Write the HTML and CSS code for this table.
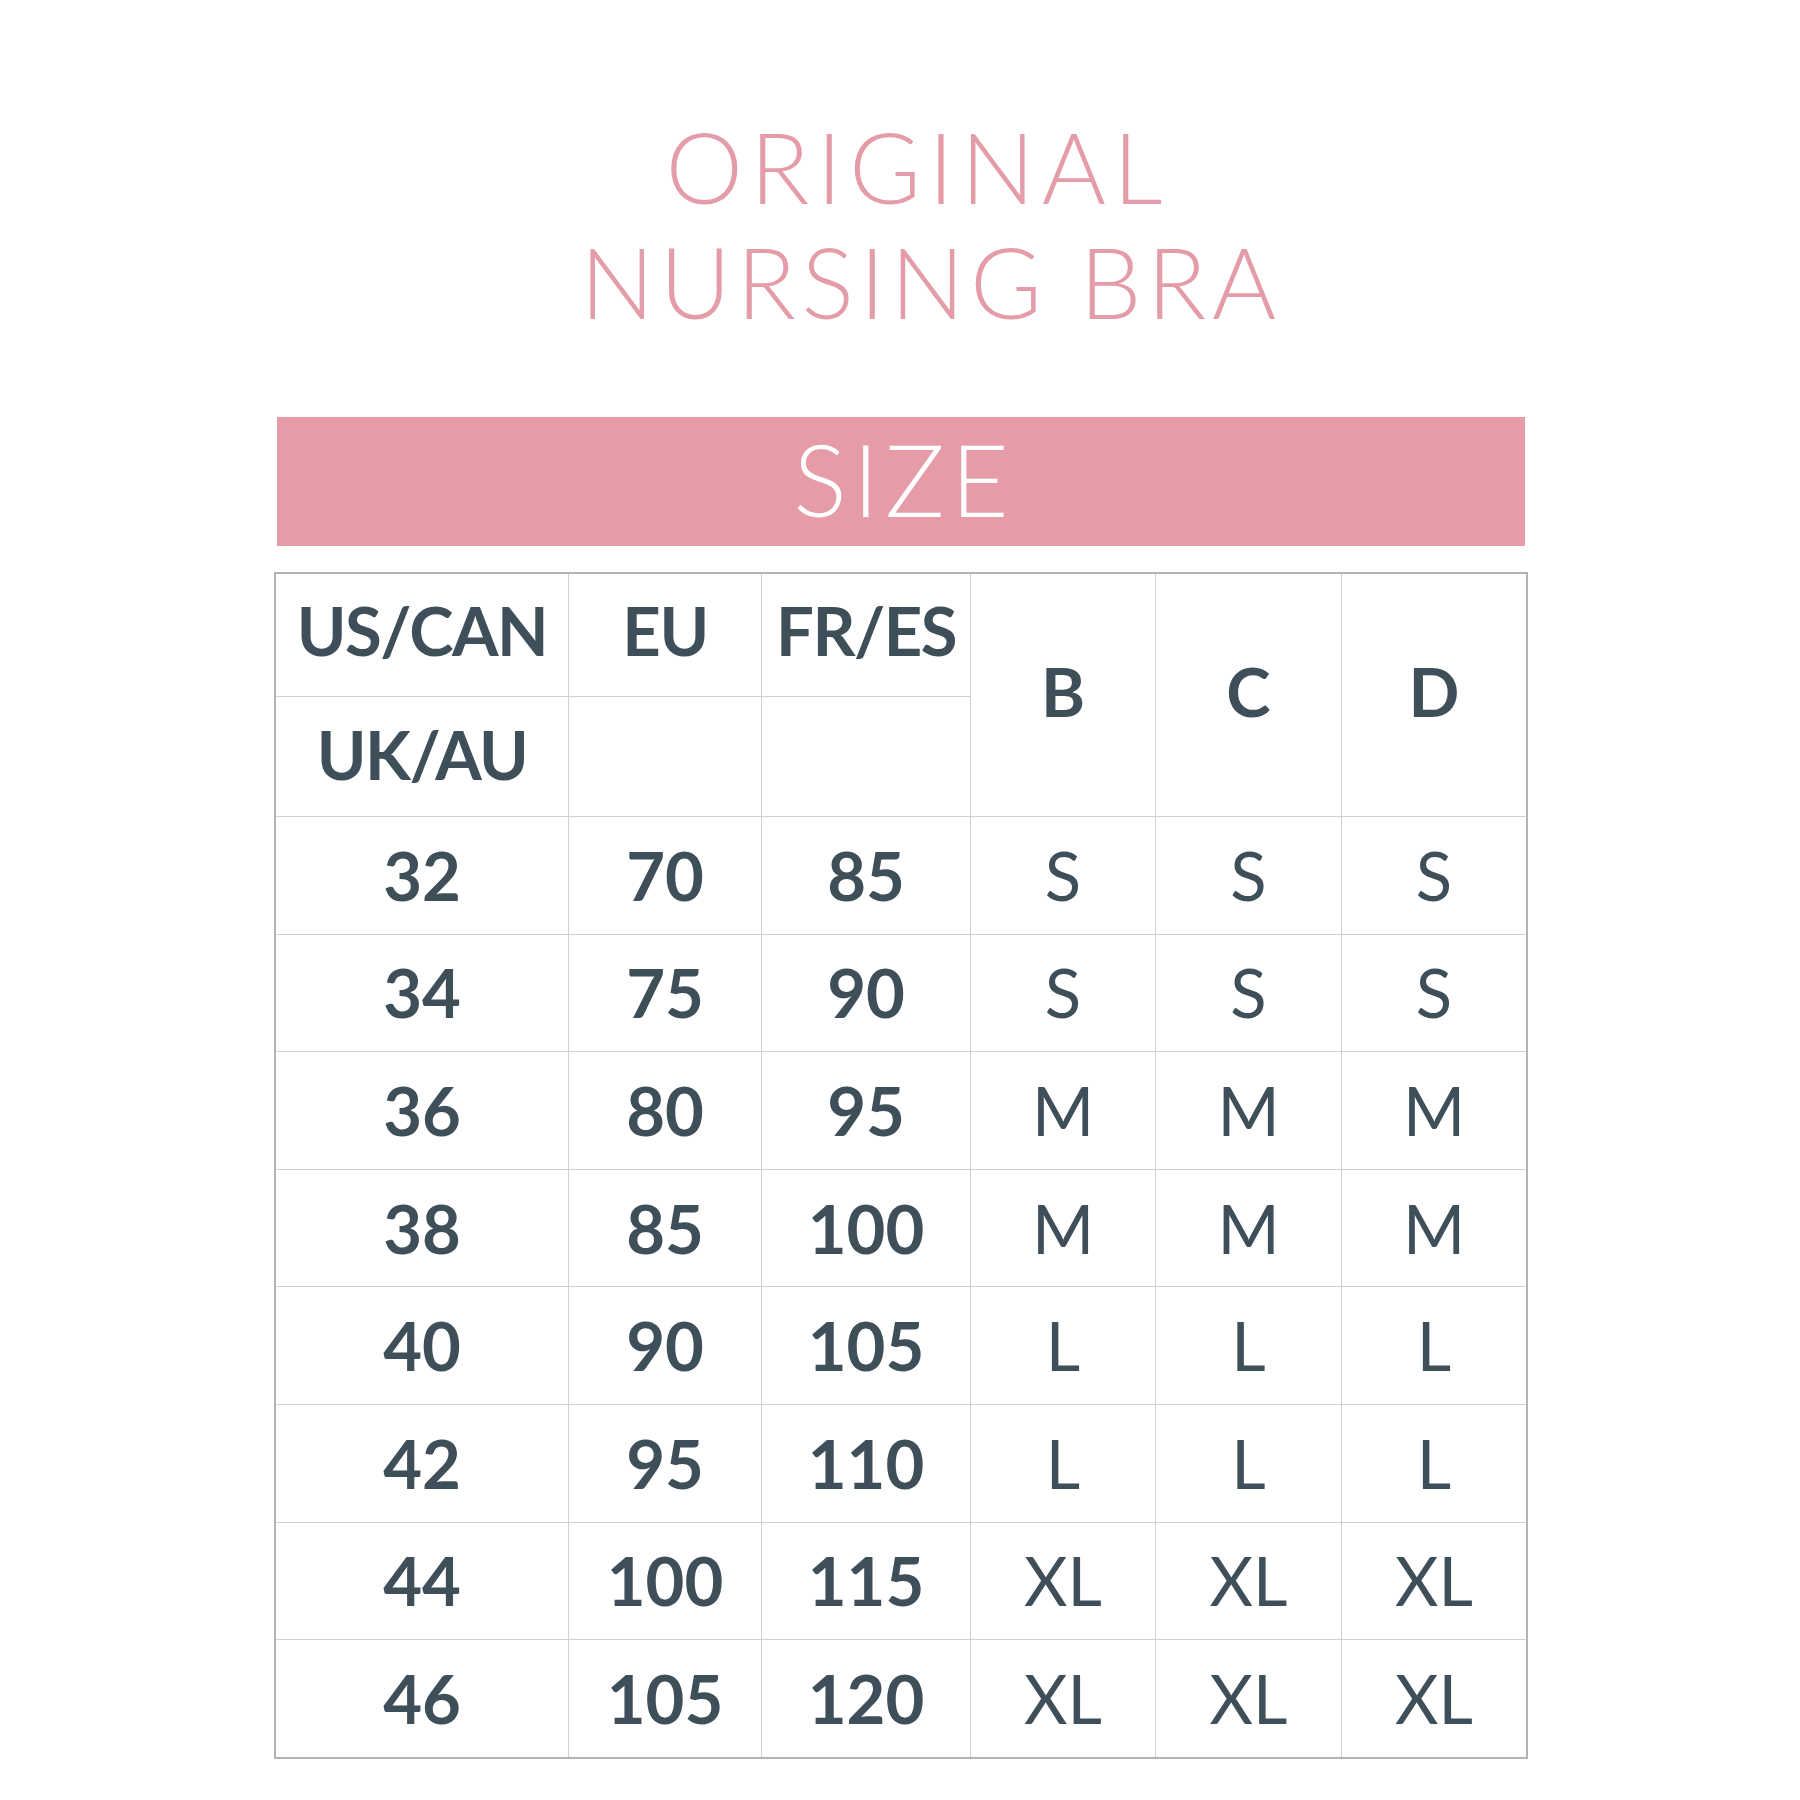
FILE: index.html
```html
<!DOCTYPE html>
<html lang="en">
<head>
<meta charset="utf-8">
<title>Original Nursing Bra – Size Chart</title>
<link rel="stylesheet" href="styles.css">
</head>
<body>
<main class="page">
  <h1 class="title">
    <span class="title-line line-one">ORIGINAL</span>
    <span class="title-line line-two">NURSING BRA</span>
  </h1>

  <div class="chart">
    <div class="size-bar">SIZE</div>

    <div class="grid">
      <div class="cell head top">US/CAN</div>
      <div class="cell head top">EU</div>
      <div class="cell head top">FR/ES</div>
      <div class="cell head cup">B</div>
      <div class="cell head cup">C</div>
      <div class="cell head cup">D</div>
      <div class="cell head">UK/AU</div>
      <div class="cell"></div>
      <div class="cell"></div>

      <div class="cell num">32</div><div class="cell num">70</div><div class="cell num">85</div>
      <div class="cell let">S</div><div class="cell let">S</div><div class="cell let">S</div>

      <div class="cell num">34</div><div class="cell num">75</div><div class="cell num">90</div>
      <div class="cell let">S</div><div class="cell let">S</div><div class="cell let">S</div>

      <div class="cell num">36</div><div class="cell num">80</div><div class="cell num">95</div>
      <div class="cell let">M</div><div class="cell let">M</div><div class="cell let">M</div>

      <div class="cell num">38</div><div class="cell num">85</div><div class="cell num">100</div>
      <div class="cell let">M</div><div class="cell let">M</div><div class="cell let">M</div>

      <div class="cell num">40</div><div class="cell num">90</div><div class="cell num">105</div>
      <div class="cell let">L</div><div class="cell let">L</div><div class="cell let">L</div>

      <div class="cell num">42</div><div class="cell num">95</div><div class="cell num">110</div>
      <div class="cell let">L</div><div class="cell let">L</div><div class="cell let">L</div>

      <div class="cell num">44</div><div class="cell num">100</div><div class="cell num">115</div>
      <div class="cell let">XL</div><div class="cell let">XL</div><div class="cell let">XL</div>

      <div class="cell num">46</div><div class="cell num">105</div><div class="cell num">120</div>
      <div class="cell let">XL</div><div class="cell let">XL</div><div class="cell let">XL</div>
    </div>
  </div>
</main>
</body>
</html>
```

FILE: styles.css
```css
html, body {
  margin: 0;
  padding: 0;
  background: #ffffff;
}

.page {
  width: 1800px;
  min-height: 1800px;
  padding-top: 109px;
  box-sizing: border-box;
  font-family: Lato, "Open Sans", "DejaVu Sans", sans-serif;
}

.title {
  margin: 0;
  display: flex;
  flex-direction: column;
  align-items: center;
  font-weight: 300;
  font-size: 98px;
  line-height: 115px;
  color: #e49da8;
}

.title-line {
  display: block;
}

.line-one {
  letter-spacing: 7px;
  padding-left: 35px;
}

.line-two {
  letter-spacing: 5.5px;
  padding-left: 62px;
}

.chart {
  width: 1254px;
  margin: 78px 0 0 274px;
}

.size-bar {
  margin: 0 3px;
  height: 129px;
  background: #e59ca7;
  color: #ffffff;
  display: flex;
  align-items: center;
  justify-content: center;
  font-weight: 300;
  font-size: 100px;
  line-height: 100px;
  letter-spacing: 6px;
  padding-left: 6px;
  padding-bottom: 7px;
  box-sizing: border-box;
}

.grid {
  margin-top: 26px;
  display: grid;
  grid-template-columns: 292px 192px 208px 184px 185px 184px;
  grid-template-rows: 122px 119px repeat(8, 116.6px);
  gap: 1px;
  background: #d0d0d0;
  border: 2px solid #b3b3b3;
}

.cell {
  background: #ffffff;
  display: flex;
  align-items: center;
  justify-content: center;
  color: #3f4f59;
  font-size: 67px;
  line-height: 1;
}

.head {
  font-weight: 700;
  letter-spacing: -1.5px;
  padding-bottom: 5px;
}

.head.top {
  padding-bottom: 9px;
}

.cup {
  grid-row: span 2;
  letter-spacing: 0;
  padding-bottom: 7px;
}

.num {
  font-weight: 700;
}

.let {
  font-weight: 400;
}
```
